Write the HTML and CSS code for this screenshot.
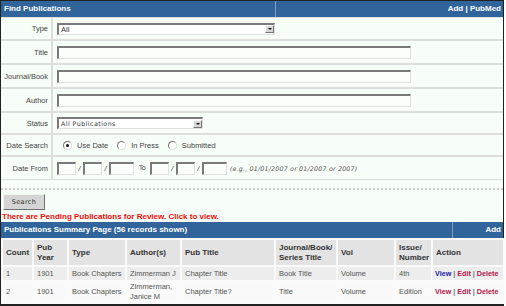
FILE: index.html
```html
<!DOCTYPE html>
<html lang="en">
<head>
<meta charset="UTF-8">
<title>Find Publications</title>
<link rel="stylesheet" href="styles.css">
</head>
<body>

<div class="page">

    <!-- Find Publications bar -->
    <div class="bar">
        <div class="bar-title bar-title-find">Find Publications</div>
        <div class="bar-links"><a href="#">Add</a> | <a href="#">PubMed</a></div>
    </div>

    <!-- Search Form -->
    <div class="search-form">
        <div class="field-label">Type</div>
        <div class="field-value">
            <div class="select select-type"><span>All</span><i class="select-btn"></i></div>
        </div>

        <div class="field-label">Title</div>
        <div class="field-value"><input type="text" class="text-box"></div>

        <div class="field-label">Journal/Book</div>
        <div class="field-value"><input type="text" class="text-box"></div>

        <div class="field-label">Author</div>
        <div class="field-value"><input type="text" class="text-box"></div>

        <div class="field-label">Status</div>
        <div class="field-value">
            <div class="select select-status"><span class="mono">All Publications</span><i class="select-btn"></i></div>
        </div>

        <div class="field-label">Date Search</div>
        <div class="field-value radios">
            <label class="radio"><i class="radio-dot checked"></i>Use Date</label>
            <label class="radio"><i class="radio-dot"></i>In Press</label>
            <label class="radio"><i class="radio-dot"></i>Submitted</label>
        </div>

        <div class="field-label">Date From</div>
        <div class="field-value dates">
            <input type="text" class="date-box">
            <span class="slash">/</span>
            <input type="text" class="date-box">
            <span class="slash">/</span>
            <input type="text" class="date-box year">
            <span class="to">To</span>
            <input type="text" class="date-box">
            <span class="slash">/</span>
            <input type="text" class="date-box">
            <span class="slash">/</span>
            <input type="text" class="date-box year">
            <span class="hint">(e.g., 01/01/2007 or 01/2007 or 2007)</span>
        </div>
    </div>

    <div class="form-actions">
        <button type="button" class="btn">Search</button>
    </div>

    <a href="#" class="pending">There are Pending Publications for Review. Click to view.</a>

    <!-- Summary -->
    <div class="bar">
        <div class="bar-title bar-title-summary">Publications Summary Page (56 records shown)</div>
        <div class="bar-links"><a href="#">Add</a></div>
    </div>

    <table class="pubs">
        <colgroup>
            <col style="width:31px">
            <col style="width:35px">
            <col style="width:58px">
            <col style="width:55px">
            <col style="width:94px">
            <col style="width:62px">
            <col style="width:58px">
            <col style="width:37px">
            <col style="width:72px">
        </colgroup>
        <thead>
            <tr>
                <th>Count</th>
                <th>Pub<br>Year</th>
                <th>Type</th>
                <th>Author(s)</th>
                <th>Pub Title</th>
                <th>Journal/Book/<br>Series Title</th>
                <th>Vol</th>
                <th>Issue/<br>Number</th>
                <th>Action</th>
            </tr>
        </thead>
        <tbody>
            <tr class="row-odd">
                <td>1</td>
                <td>1901</td>
                <td>Book Chapters</td>
                <td>Zimmerman J</td>
                <td>Chapter Title</td>
                <td>Book Title</td>
                <td>Volume</td>
                <td>4th</td>
                <td class="action"><a href="#" class="view">View</a> | <a href="#">Edit</a> | <a href="#">Delete</a></td>
            </tr>
            <tr class="row-even">
                <td>2</td>
                <td>1901</td>
                <td>Book Chapters</td>
                <td>Zimmerman,<br>Janice M</td>
                <td>Chapter Title?</td>
                <td>Title</td>
                <td>Volume</td>
                <td>Edition</td>
                <td class="action"><a href="#">View</a> | <a href="#">Edit</a> | <a href="#">Delete</a></td>
            </tr>
        </tbody>
    </table>
</div>

</body>
</html>
```

FILE: styles.css
```css
/* General page */
html, body {
    margin: 0;
    padding: 0;
    background: #fff;
    font-family: "Liberation Sans", Arial, sans-serif;
    font-size: 7.5px;
    color: #555;
}

.page {
    width: 502px;
    border: 1px solid #222;
    border-bottom-width: 2px;
    background: #f7fdf7;
}

/* Blue title bars */
.bar {
    display: flex;
    height: 16px;
    background: #30649b;
    color: #fff;
    font-weight: bold;
    font-size: 8px;
    line-height: 16px;
}

.bar-title {
    padding-left: 3px;
    border-right: 1px solid #7f9fc0;
    box-sizing: border-box;
}

.bar-title-find {
    width: 275px;
}

.bar-title-summary {
    width: 452px;
}

.bar-links {
    flex: 1;
    text-align: right;
    padding-right: 2px;
}

.bar-links a {
    color: #fff;
    text-decoration: none;
}

/* Search form */
.search-form {
    display: grid;
    grid-template-columns: 50px 1fr;
    grid-template-rows: 21px 22px 22px 22px 20px 20px 22px;
    column-gap: 2px;
    row-gap: 2px;
    background: #dcdfdc;
    padding-top: 1px;
    border-bottom: 1px solid #dcdfdc;
    color: #444;
}

.field-label,
.field-value {
    background: #f7fdf7;
    display: flex;
    align-items: center;
}

.field-label {
    justify-content: flex-end;
    padding-right: 3px;
}

.field-value {
    padding-left: 4px;
}

.text-box {
    width: 354px;
    height: 13px;
    box-sizing: border-box;
    margin: 0;
    padding: 0;
    border: 1px solid;
    border-color: #7a7a7a #e0e0e0 #e0e0e0 #7a7a7a;
    border-top-width: 2px;
    border-left-width: 2px;
    background: #fbfffb;
}

.select {
    height: 12px;
    box-sizing: border-box;
    border: 1px solid;
    border-color: #7a7a7a #e0e0e0 #e0e0e0 #7a7a7a;
    border-top-width: 2px;
    border-left-width: 2px;
    background: #fff;
    display: flex;
    align-items: center;
    justify-content: space-between;
    padding-left: 2px;
    color: #333;
}

.select-type {
    width: 218px;
}

.select-status {
    width: 146px;
}

.mono {
    font-family: "DejaVu Sans", Verdana, sans-serif;
    font-size: 6.3px;
    letter-spacing: 0.45px;
}

.select-btn {
    width: 9px;
    height: 8px;
    background: #d6d6d6;
    border: 1px solid;
    border-color: #fff #777 #777 #fff;
    box-sizing: border-box;
    position: relative;
}

.select-btn::after {
    content: "";
    position: absolute;
    left: 2px;
    top: 2px;
    border-left: 2px solid transparent;
    border-right: 2px solid transparent;
    border-top: 2px solid #111;
}

/* Radios */
.radio {
    display: flex;
    align-items: center;
    margin-left: 6px;
    margin-right: 3px;
}

.radio-dot {
    width: 7px;
    height: 7px;
    border-radius: 50%;
    border: 1px solid;
    border-color: #777 #ddd #ddd #777;
    background: #fff;
    margin-right: 5px;
    position: relative;
}

.radio-dot.checked::after {
    content: "";
    position: absolute;
    left: 2px;
    top: 2px;
    width: 3px;
    height: 3px;
    border-radius: 50%;
    background: #111;
}

/* Date boxes */
.date-box {
    width: 19px;
    height: 13px;
    box-sizing: border-box;
    margin: 0;
    padding: 0;
    border: 1px solid;
    border-color: #7a7a7a #e0e0e0 #e0e0e0 #7a7a7a;
    border-top-width: 2px;
    border-left-width: 2px;
    background: #fbfffb;
}

.date-box.year {
    width: 25px;
}

.slash {
    width: 7px;
    text-align: center;
    font-style: italic;
}

.to {
    margin: 0 4px 0 5px;
    font-family: "DejaVu Sans", Verdana, sans-serif;
    font-size: 6.5px;
}

.hint {
    margin-left: 3px;
    font-family: "DejaVu Sans", Verdana, sans-serif;
    font-style: italic;
    font-size: 6.3px;
    letter-spacing: 0.2px;
    color: #555;
}

/* Search button */
.form-actions {
    margin-top: 8px;
    border-top: 2px dotted #c8c8c8;
    padding: 4px 0 0 2px;
    height: 17px;
}

.btn {
    width: 42px;
    height: 16px;
    padding: 0;
    margin: 0;
    background: #d4d4d4;
    border: 1px solid;
    border-color: #f4f4f4 #707070 #707070 #f4f4f4;
    font-family: "DejaVu Sans", Verdana, sans-serif;
    font-size: 6.5px;
    letter-spacing: 0.4px;
    color: #333;
}

.pending {
    display: block;
    height: 11px;
    line-height: 11px;
    padding-left: 1px;
    color: #f00c0c;
    font-weight: bold;
    font-size: 8px;
    text-decoration: none;
}

/* Publications table */
.pubs {
    width: 502px;
    table-layout: fixed;
    border-collapse: collapse;
    background: #fff;
}

.pubs th,
.pubs td {
    border: 2px solid #fafafa;
    text-align: left;
    padding: 0 0 0 3px;
    vertical-align: middle;
    line-height: 10px;
    overflow: hidden;
    white-space: nowrap;
    color: #555;
}

.pubs th {
    height: 25px;
    background: #e3e3e3;
    color: #333;
    font-size: 8px;
    font-weight: bold;
}

.pubs .row-odd td {
    height: 13px;
    background: #ededed;
}

.pubs .row-even td {
    height: 19px;
    background: #f9f9f9;
}

.pubs td.action {
    font-weight: bold;
    font-size: 7.2px;
    color: #777;
    padding-left: 2px;
}

.action a {
    color: #b3164a;
    text-decoration: none;
}

.action a.view {
    color: #1a22a0;
}
```
